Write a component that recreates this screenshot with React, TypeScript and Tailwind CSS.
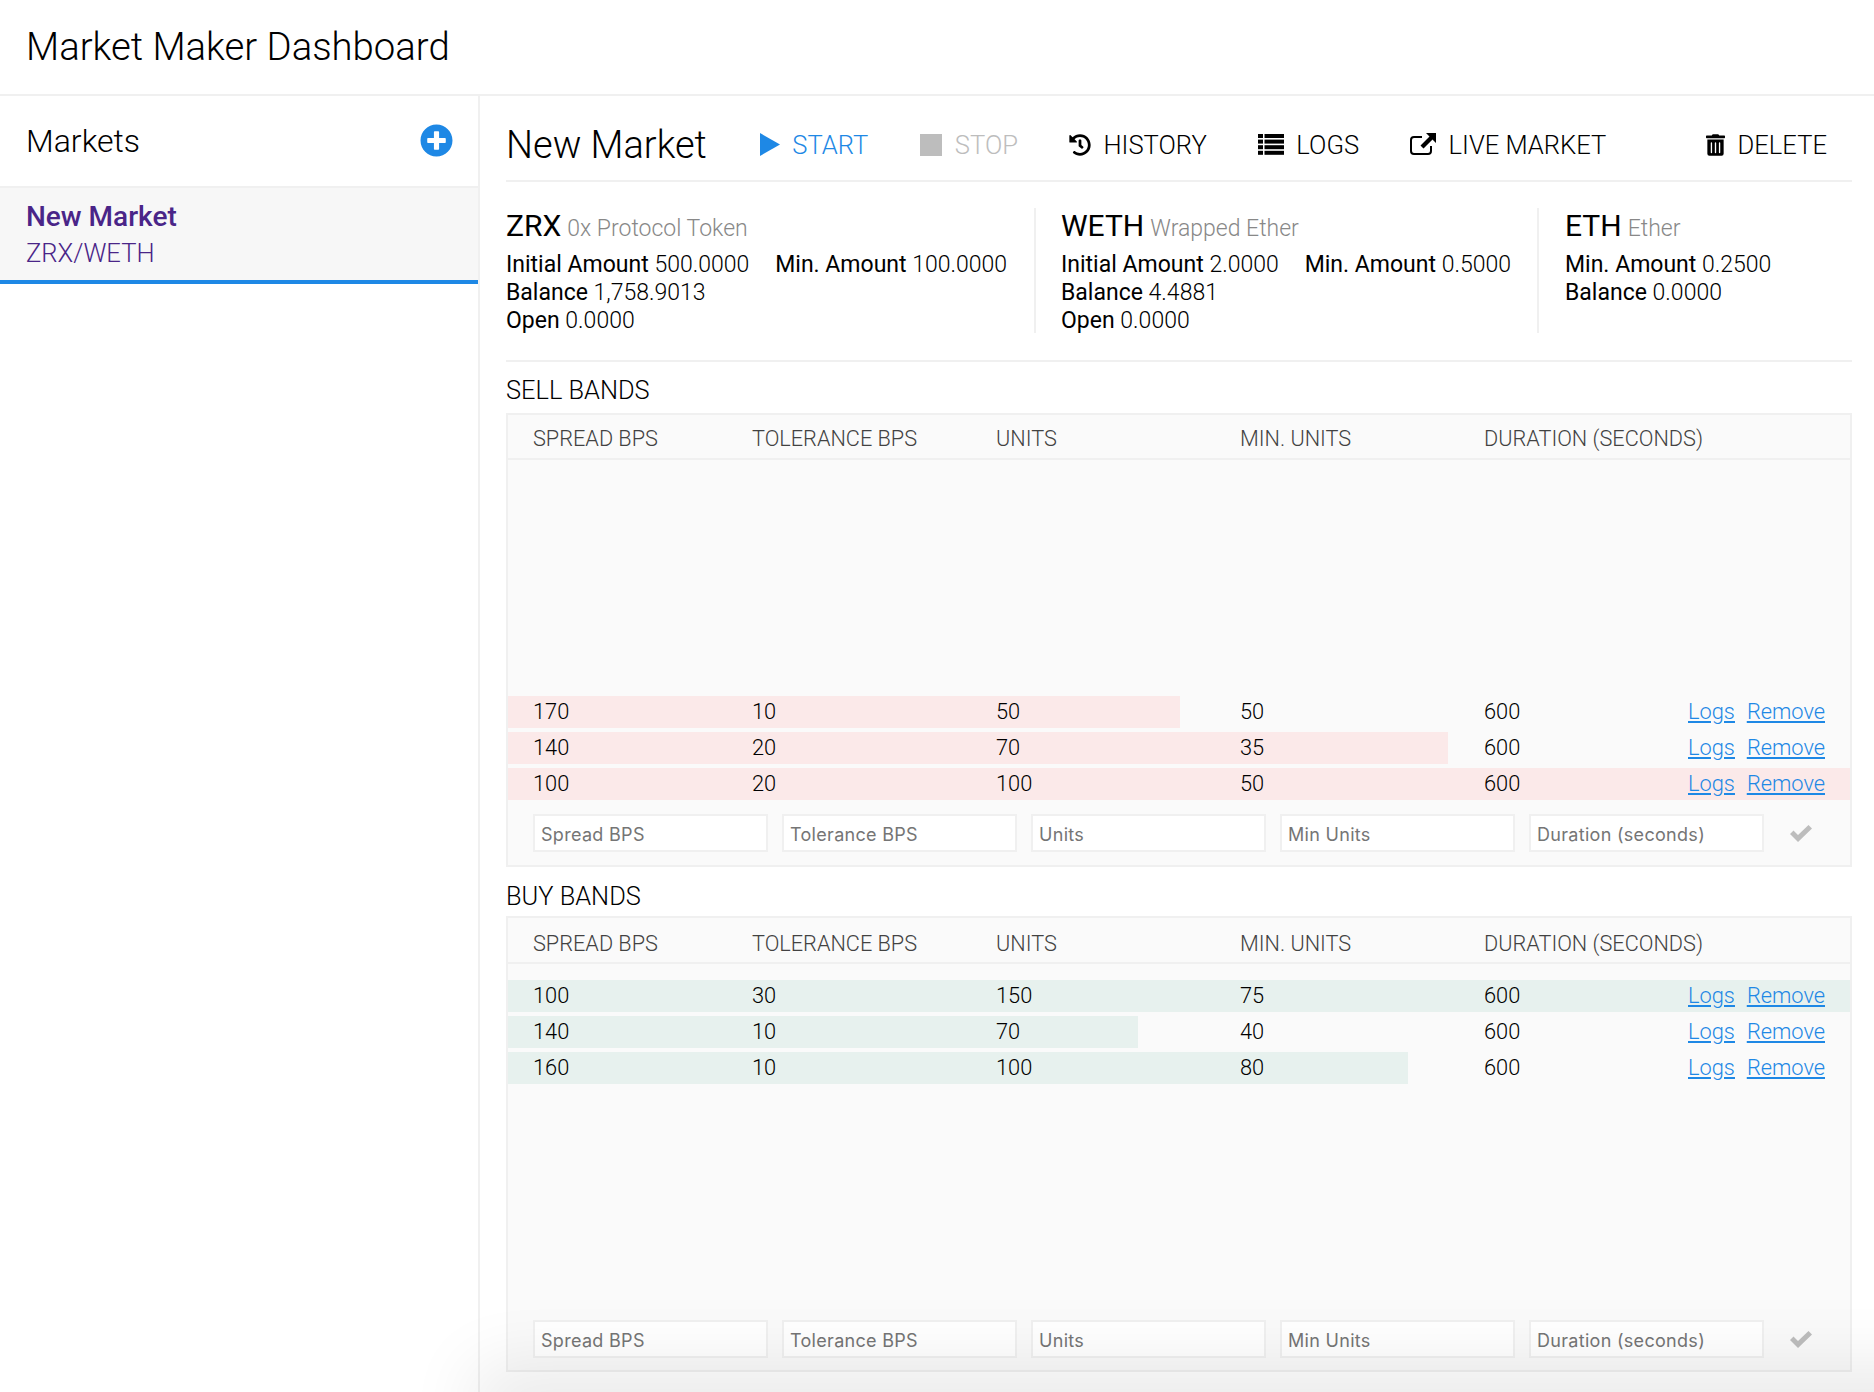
import { FaHistory, FaPlusCircle, FaTrashAlt } from "react-icons/fa";

const sellBands = [
  { spread: 170, tolerance: 10, units: 50, minUnits: 50, duration: 600, width: 672 },
  { spread: 140, tolerance: 20, units: 70, minUnits: 35, duration: 600, width: 940 },
  { spread: 100, tolerance: 20, units: 100, minUnits: 50, duration: 600, width: 1342 },
];

const buyBands = [
  { spread: 100, tolerance: 30, units: 150, minUnits: 75, duration: 600, width: 1342 },
  { spread: 140, tolerance: 10, units: 70, minUnits: 40, duration: 600, width: 630 },
  { spread: 160, tolerance: 10, units: 100, minUnits: 80, duration: 600, width: 900 },
];

type Band = (typeof sellBands)[number];

function Stat({ label, value }: { label: string; value: string }) {
  return (
    <span>
      <span className="font-normal">{label}</span> <span className="font-light">{value}</span>
    </span>
  );
}

function ToolButton({ icon, label, className }: { icon: React.ReactNode; label: string; className?: string }) {
  return (
    <div className={`flex items-center gap-[12.5px] ${className ?? "text-black"}`}>
      {icon}
      <span>{label}</span>
    </div>
  );
}

function TokenHeading({ symbol, name }: { symbol: string; name: string }) {
  return (
    <div className="flex items-baseline gap-[6px] leading-[32px] mb-[6px] pt-[2px]">
      <span className="text-[30px] font-normal">{symbol}</span>
      <span className="text-[#888] font-light text-[23px]">{name}</span>
    </div>
  );
}

function BandRow({ band, barColor }: { band: Band; barColor: string }) {
  return (
    <div className="relative h-[32px] mb-[4px] last:mb-0">
      <div className={`absolute inset-y-0 left-0 ${barColor}`} style={{ width: band.width }} />
      <div className="relative grid grid-cols-[219px_244px_244px_244px_1fr] items-center h-full pl-[25px] pb-[2px] text-[21.8px] font-light text-black">
        <span>{band.spread}</span>
        <span>{band.tolerance}</span>
        <span>{band.units}</span>
        <span>{band.minUnits}</span>
        <div className="flex items-center justify-between pr-[25px]">
          <span>{band.duration}</span>
          <span className="flex gap-[12px] text-[#1e88e5] underline">
            <a>Logs</a>
            <a>Remove</a>
          </span>
        </div>
      </div>
    </div>
  );
}

function BandForm() {
  const fields = ["Spread BPS", "Tolerance BPS", "Units", "Min Units", "Duration (seconds)"];
  return (
    <div className="flex items-center pl-[25px] h-[38px]">
      {fields.map((f) => (
        <div
          key={f}
          className="w-[235px] h-[38px] mr-[14px] flex items-center pl-[6px] pt-[2px] bg-white border-2 border-[#f0f0f0] text-[18px] text-[#757575] font-['Inter',sans-serif] tracking-[0.3px]"
        >
          {f}
        </div>
      ))}
      <svg viewBox="0 0 22 17" className="ml-[12px] w-[22px] h-[17px] fill-[#bdbdbd]">
        <polygon points="0,9 3.5,5.5 8,10 18.5,0 22,3.5 8,17" />
      </svg>
    </div>
  );
}

function BandsHeader({ className }: { className: string }) {
  return (
    <div className={`grid grid-cols-[219px_244px_244px_244px_1fr] items-center pl-[25px] border-b-2 border-[#f0f0f0] text-[21.7px] font-light text-[#424242] ${className}`}>
      <span>SPREAD BPS</span>
      <span>TOLERANCE BPS</span>
      <span>UNITS</span>
      <span>MIN. UNITS</span>
      <span>DURATION (SECONDS)</span>
    </div>
  );
}

export default function App() {
  return (
    <div className="relative w-[1874px] h-[1392px] overflow-hidden bg-white flex flex-col font-['Roboto',sans-serif] text-black">
      <header className="h-[96px] shrink-0 flex items-center pl-[26px] border-b-2 border-[#f0f0f0] text-[38.3px] font-light">
        Market Maker Dashboard
      </header>

      <div className="flex flex-1 min-h-0">
        <aside className="w-[480px] shrink-0 border-r-2 border-[#f0f0f0]">
          <div className="h-[92px] flex items-center justify-between pl-[26px] pr-[25px] border-b-2 border-[#f0f0f0]">
            <span className="text-[32px] font-light">Markets</span>
            <FaPlusCircle className="w-[33px] h-[33px] -mt-[2px] text-[#1e88e5]" />
          </div>
          <div className="h-[96px] pl-[26px] pt-[11px] bg-[#f7f7f7] border-b-4 border-[#1e88e5] text-[#4a2588]">
            <div className="text-[28px] font-medium leading-[36px]">New Market</div>
            <div className="text-[25.6px] font-light leading-[36px]">ZRX/WETH</div>
          </div>
        </aside>

        <main className="flex-1 min-w-0 pl-[26px] pr-[22px]">
          <div className="h-[86px] flex items-center pt-[14px] border-b-2 border-[#f0f0f0] text-[25.6px] font-light pr-[25px]">
            <h1 className="text-[38px] font-light mr-[53px]">New Market</h1>
            <div className="flex items-center gap-[51px] flex-1">
              <ToolButton
                className="text-[#1e88e5]"
                label="START"
                icon={
                  <svg viewBox="0 0 20 23" className="w-[20px] h-[23px] fill-current">
                    <polygon points="0,0 20,11.5 0,23" />
                  </svg>
                }
              />
              <ToolButton
                className="text-[#bdbdbd] ml-[1px]"
                label="STOP"
                icon={<div className="w-[22px] h-[22px] bg-[#bdbdbd]" />}
              />
              <ToolButton label="HISTORY" icon={<FaHistory className="w-[22px] h-[22px]" />} />
              <ToolButton
                label="LOGS"
                icon={
                  <svg viewBox="0 0 26 21" className="w-[26px] h-[21px] fill-current">
                    <rect x="0" y="0" width="5" height="4" />
                    <rect x="6.5" y="0" width="19.5" height="4" />
                    <rect x="0" y="5.6" width="5" height="4" />
                    <rect x="6.5" y="5.6" width="19.5" height="4" />
                    <rect x="0" y="11.2" width="5" height="4" />
                    <rect x="6.5" y="11.2" width="19.5" height="4" />
                    <rect x="0" y="16.8" width="5" height="4" />
                    <rect x="6.5" y="16.8" width="19.5" height="4" />
                  </svg>
                }
              />
              <ToolButton
                label="LIVE MARKET"
                icon={
                  <svg viewBox="0 0 26 22" className="w-[26px] h-[22px] -mt-[2px]">
                    <path
                      d="M21 13v5a3 3 0 0 1-3 3H4a3 3 0 0 1-3-3V7a3 3 0 0 1 3-3h8"
                      fill="none"
                      stroke="currentColor"
                      strokeWidth="2"
                    />
                    <path d="M16 0h10v10l-3.5-3.5-9 9-3-3 9-9z" fill="currentColor" />
                  </svg>
                }
              />
              <ToolButton className="text-black ml-auto" label="DELETE" icon={<FaTrashAlt className="w-[19px] h-[22px]" />} />
            </div>
          </div>

          <div className="h-[180px] flex items-start pt-[26px] border-b-2 border-[#f0f0f0] text-[23px] leading-[28px]">
            <div className="w-[530px] h-[125px] border-r-2 border-[#f0f0f0]">
              <TokenHeading symbol="ZRX" name="0x Protocol Token" />
              <div className="flex gap-[26px]">
                <Stat label="Initial Amount" value="500.0000" />
                <Stat label="Min. Amount" value="100.0000" />
              </div>
              <div><Stat label="Balance" value="1,758.9013" /></div>
              <div><Stat label="Open" value="0.0000" /></div>
            </div>
            <div className="w-[503px] h-[125px] pl-[25px] border-r-2 border-[#f0f0f0]">
              <TokenHeading symbol="WETH" name="Wrapped Ether" />
              <div className="flex gap-[26px]">
                <Stat label="Initial Amount" value="2.0000" />
                <Stat label="Min. Amount" value="0.5000" />
              </div>
              <div><Stat label="Balance" value="4.4881" /></div>
              <div><Stat label="Open" value="0.0000" /></div>
            </div>
            <div className="pl-[26px]">
              <TokenHeading symbol="ETH" name="Ether" />
              <div><Stat label="Min. Amount" value="0.2500" /></div>
              <div><Stat label="Balance" value="0.0000" /></div>
            </div>
          </div>

          <h2 className="h-[51px] flex items-center pt-[5px] text-[25.4px] font-light">SELL BANDS</h2>
          <section className="h-[454px] flex flex-col bg-[#fafafa] border-2 border-[#f0f0f0]">
            <BandsHeader className="h-[45px] pt-[5px]" />
            <div className="flex-1 flex flex-col justify-end">
              {sellBands.map((b) => (
                <BandRow key={b.spread} band={b} barColor="bg-[#fbe9e9]" />
              ))}
            </div>
            <div className="mt-[14px] mb-[13px]">
              <BandForm />
            </div>
          </section>

          <h2 className="h-[49px] flex items-center pt-[9px] text-[25.4px] font-light">BUY BANDS</h2>
          <section className="h-[456px] flex flex-col bg-[#fafafa] border-2 border-[#f0f0f0]">
            <BandsHeader className="h-[46px] pt-[8px]" />
            <div className="flex-1 pt-[16px]">
              {buyBands.map((b) => (
                <BandRow key={b.spread} band={b} barColor="bg-[#e7f1ee]" />
              ))}
            </div>
            <div className="mb-[12px]">
              <BandForm />
            </div>
          </section>
        </main>
      </div>

      {/* soft window shadow along the bottom edge */}
      <div className="absolute left-[500px] right-[-100px] top-[1392px] h-[30px] shadow-[0_0_70px_25px_rgba(0,0,0,0.09)] pointer-events-none" />
    </div>
  );
}
